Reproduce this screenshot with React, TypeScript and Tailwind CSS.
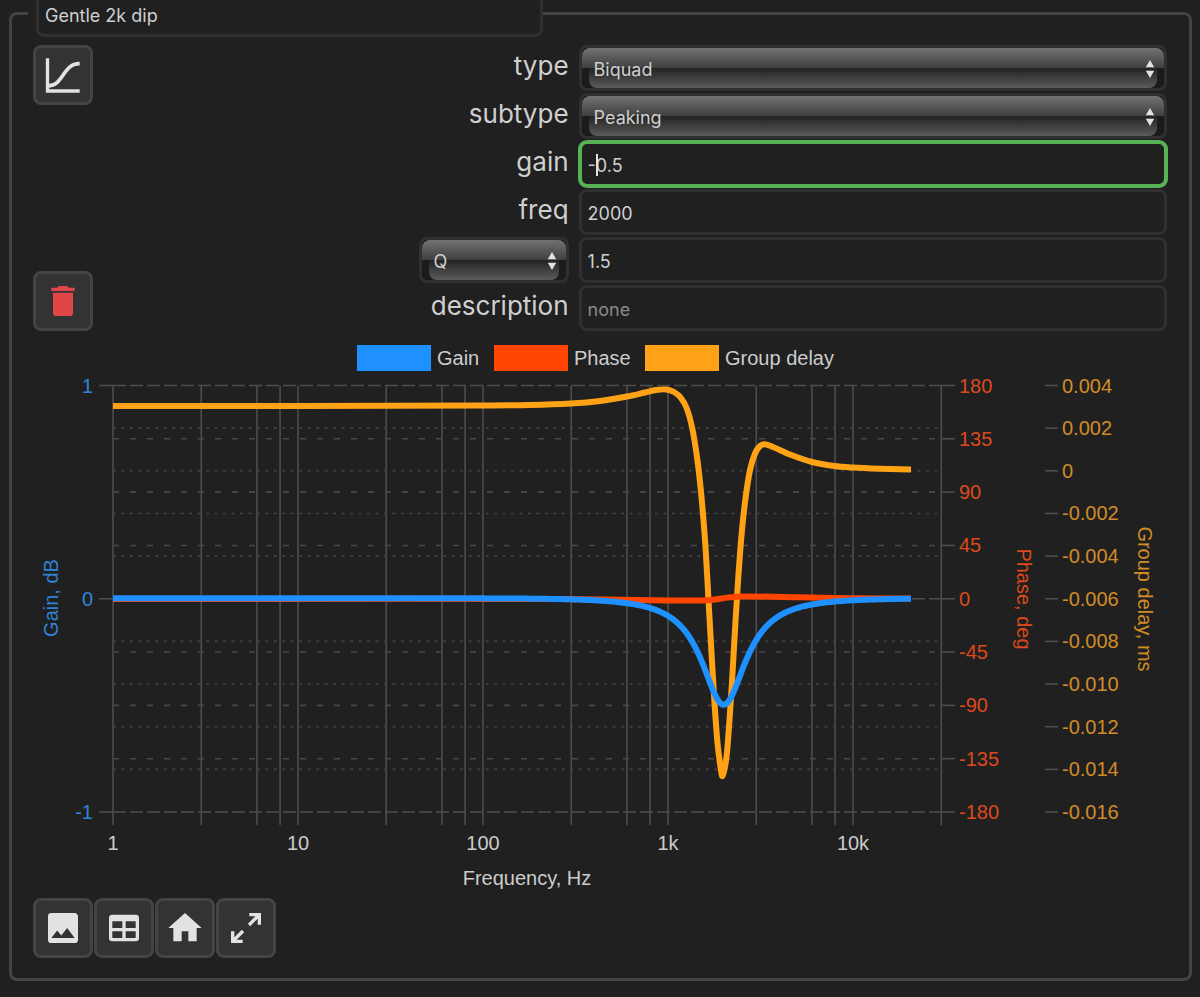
import { useState } from "react";
import type { ReactNode } from "react";

const ICONS = {
  image:
    "M8.5,13.5L11,16.5L14.5,12L19,18H5M21,19V5C21,3.89 20.1,3 19,3H5A2,2 0 0,0 3,5V19A2,2 0 0,0 5,21H19A2,2 0 0,0 21,19Z",
  table:
    "M5,4H19A2,2 0 0,1 21,6V18A2,2 0 0,1 19,20H5A2,2 0 0,1 3,18V6A2,2 0 0,1 5,4M5,8V12H11V8H5M13,8V12H19V8H13M5,14V18H11V14H5M13,14V18H19V14H13Z",
  home: "M10,20V14H14V20H19V12H22L12,3L2,12H5V20H10Z",
  expand:
    "M10,21V19H6.41L10.91,14.5L9.5,13.09L5,17.59V14H3V21H10M14.5,10.91L19,6.41V10H21V3H14V5H17.59L13.09,9.5L14.5,10.91Z",
  trash:
    "M19,4H15.5L14.5,3H9.5L8.5,4H5V6H19M6,19A2,2 0 0,0 8,21H16A2,2 0 0,0 18,19V7H6V19Z",
};

function Icon({ path }: { path: string }) {
  return (
    <svg viewBox="0 0 24 24" className="h-10 w-10" fill="currentColor">
      <path d={path} />
    </svg>
  );
}

function CurveIcon() {
  return (
    <svg
      viewBox="0 0 24 24"
      className="h-10 w-10"
      fill="none"
      stroke="currentColor"
      strokeWidth="2"
    >
      <path d="M2.700 2v19.600h19.300" />
      <path d="M3 18.500C12.500 18.500 11.500 5.200 22 5.200" strokeWidth="2.200" />
    </svg>
  );
}

function IconButton({
  label,
  danger = false,
  children,
}: {
  label: string;
  danger?: boolean;
  children: ReactNode;
}) {
  return (
    <button
      type="button"
      aria-label={label}
      className={[
        "flex h-[60px] w-[60px] cursor-pointer items-center justify-center rounded-lg border-[3px] border-[#444444] bg-[#333333] hover:bg-[#3d3d3d]",
        danger ? "text-[#e04648]" : "text-[#e2e2e2]",
      ].join(" ")}
    >
      {children}
    </button>
  );
}

function GlossySelect({
  id,
  label,
  options,
}: {
  id: string;
  label?: string;
  options: string[];
}) {
  const [value, setValue] = useState(options[0]);

  return (
    <div className="relative h-[46px] w-full rounded-lg border-[3px] border-[#303030] bg-[#1b1b1b]">
      <div className="h-1/2 rounded-t-lg bg-gradient-to-b from-[#727272] to-[#404040]" />
      <div className="mx-[7px] h-1/2 rounded-b-lg bg-gradient-to-b from-[#232323] to-[#5c5c5c]" />
      <select
        id={id}
        aria-label={label}
        value={value}
        onChange={(e) => setValue(e.target.value)}
        className="absolute inset-0 w-full appearance-none bg-transparent px-3 pt-[2px] text-[18px] text-[#cfcfcf] outline-none"
      >
        {options.map((option) => (
          <option key={option} className="bg-[#333333]">
            {option}
          </option>
        ))}
      </select>
      <svg
        viewBox="0 0 10 18"
        className="pointer-events-none absolute top-[12px] right-[9px] h-[18px] w-[10px]"
        fill="#e2e2e2"
      >
        <path d="M5 0L9.200 7.200H0.800zM5 18L9.200 10.800H0.800z" />
      </svg>
    </div>
  );
}

function TextField({
  id,
  label,
  initial,
  placeholder,
  active = false,
}: {
  id: string;
  label?: string;
  initial: string;
  placeholder?: string;
  active?: boolean;
}) {
  const [value, setValue] = useState(initial);

  return (
    <div className="relative">
      <input
        id={id}
        aria-label={label}
        type="text"
        value={value}
        placeholder={placeholder}
        onChange={(e) => setValue(e.target.value)}
        className={[
          "h-[46px] w-full rounded-lg border-[3px] bg-[#202020] px-[6px] pt-[2px] text-[18px] text-[#cfcfcf] outline-none placeholder:text-[#8a8a8a]",
          active ? "border-[#56b454] ring-1 ring-[#56b454]" : "border-[#303030]",
        ].join(" ")}
      />
      {active ? (
        <span className="pointer-events-none absolute top-[13px] left-[17px] h-[22px] w-[2px] bg-[#e2e2e2]" />
      ) : null}
    </div>
  );
}

function FieldLabel({ htmlFor, text }: { htmlFor: string; text: string }) {
  return (
    <label htmlFor={htmlFor} className="pb-1 text-right text-[26px] leading-8">
      {text}
    </label>
  );
}

// plot area
const LEFT = 113;
const RIGHT = 941;
const TOP = 385.5;
const ZERO = 598.75;
const BOTTOM = 812;
const DECADE = 185;

const BLUE = "#1e90ff";
const RED = "#ff4500";
const ORANGE = "#ffa216";

const fx = (freq: number) => LEFT + DECADE * Math.log10(freq);

const GRID_FREQS = [
  1, 3, 6, 8, 10, 30, 60, 80, 100, 300, 600, 800, 1000, 3000, 6000, 8000, 10000,
  30000,
];
const FREQ_TICKS = [
  { freq: 1, text: "1" },
  { freq: 10, text: "10" },
  { freq: 100, text: "100" },
  { freq: 1000, text: "1k" },
  { freq: 10000, text: "10k" },
];
const GAIN_TICKS = [1, 0, -1];
const PHASE_TICKS = [180, 135, 90, 45, 0, -45, -90, -135, -180];
const DELAY_TICKS = [
  "0.004",
  "0.002",
  "0",
  "-0.002",
  "-0.004",
  "-0.006",
  "-0.008",
  "-0.010",
  "-0.012",
  "-0.014",
  "-0.016",
];

const LEGEND = [
  { text: "Gain", color: BLUE, x: 357 },
  { text: "Phase", color: RED, x: 494 },
  { text: "Group delay", color: ORANGE, x: 645 },
];

const DELAY_POINTS = [
  [113, 406], [300, 406], [482, 405.5], [530, 405], [571, 403.5], [600, 401],
  [627, 396.5], [645, 392.5], [656, 390], [666, 389.5], [674, 392],
  [681, 398], [687, 409], [692, 427], [697, 457], [701.5, 497], [705.5, 547],
  [708.5, 600], [711.5, 653], [714.5, 703], [717.5, 743], [720.5, 767],
  [722.5, 776], [726.5, 757], [729.3, 723], [731.7, 687], [735, 630],
  [738.3, 577], [742, 530], [745.7, 497], [750, 470], [755, 453.5],
  [760, 446], [765, 444.3], [773, 447], [790, 454.5], [812, 462],
  [834, 466], [852, 467.5], [880, 468.7], [911, 469.5],
];

const PHASE_POINTS = [
  [113, 599], [560, 599], [640, 600], [700, 600.5], [715, 599.5], [728, 597.5],
  [745, 596.5], [800, 597.3], [850, 598.3], [911, 598.5],
];

function smoothPath(points: number[][]) {
  let d = `M${points[0][0]} ${points[0][1]}`;
  for (let i = 0; i < points.length - 1; i++) {
    const p0 = points[Math.max(0, i - 1)];
    const p1 = points[i];
    const p2 = points[i + 1];
    const p3 = points[Math.min(points.length - 1, i + 2)];
    const t = (p2[0] - p1[0]) / 3;
    const m1 = (p2[1] - p0[1]) / (p2[0] - p0[0]);
    const m2 = (p3[1] - p1[1]) / (p3[0] - p1[0]);
    d += `C${p1[0] + t} ${p1[1] + m1 * t} ${p2[0] - t} ${p2[1] - m2 * t} ${p2[0]} ${p2[1]}`;
  }
  return d;
}

// magnitude response of a peaking biquad
function peakingGain(freq: number, center: number, gain: number, q: number) {
  const a = Math.pow(10, gain / 40);
  const w = freq / center;
  const re = (1 - w * w) ** 2;
  const num = re + ((w * a) / q) ** 2;
  const den = re + (w / (a * q)) ** 2;
  return 10 * Math.log10(num / den);
}

function gainPath() {
  const parts: string[] = [];
  for (let x = LEFT; x <= 911; x += 2) {
    const freq = Math.pow(10, (x - LEFT) / DECADE);
    const y = ZERO - 0.5 - peakingGain(freq, 2000, -0.5, 1.5) * (ZERO - TOP);
    parts.push(`${x} ${y.toFixed(2)}`);
  }
  return `M${parts.join("L")}`;
}

function ResponseChart() {
  const height = BOTTOM - TOP;

  return (
    <svg
      viewBox="33 331 1135 567"
      className="block h-auto w-full font-['Liberation_Sans',Arial,sans-serif] text-[20px]"
      role="img"
      aria-label="Filter response"
    >
      {LEGEND.map((item) => (
        <g key={item.text}>
          <rect x={item.x} y="345" width="74" height="26" fill={item.color} />
          <text x={item.x + 80} y="365" fill="#cccccc">
            {item.text}
          </text>
        </g>
      ))}

      <g stroke="#4d4d4d" strokeWidth="1.600">
        {GRID_FREQS.map((freq) => (
          <line key={freq} x1={fx(freq)} x2={fx(freq)} y1={TOP} y2={BOTTOM + 13} />
        ))}
        {GAIN_TICKS.map((gain) => {
          const y = ZERO - gain * (ZERO - TOP);
          return (
            <g key={gain}>
              <line x1={LEFT - 14} x2={LEFT} y1={y} y2={y} />
              <line x1={LEFT} x2={RIGHT} y1={y} y2={y} strokeDasharray="13 4" />
            </g>
          );
        })}
        {PHASE_TICKS.map((phase, i) => {
          const y = TOP + (height * i) / 8;
          return (
            <g key={phase}>
              <line x1={RIGHT} x2={RIGHT + 14} y1={y} y2={y} />
              {i % 4 ? (
                <line
                  x1={LEFT}
                  x2={RIGHT}
                  y1={y}
                  y2={y}
                  stroke="#484848"
                  strokeDasharray="6 11"
                />
              ) : null}
            </g>
          );
        })}
        {DELAY_TICKS.map((delay, i) => {
          const y = TOP + (height * i) / 10;
          return (
            <g key={delay}>
              <line x1="1045" x2="1058" y1={y} y2={y} />
              {i % 5 ? (
                <line
                  x1={LEFT}
                  x2={RIGHT}
                  y1={y}
                  y2={y}
                  stroke="#424242"
                  strokeDasharray="2.800 5.670"
                />
              ) : null}
            </g>
          );
        })}
      </g>

      <g fill="none" strokeWidth="6" strokeLinejoin="round">
        <path d={smoothPath(DELAY_POINTS)} stroke={ORANGE} />
        <path d={smoothPath(PHASE_POINTS)} stroke={RED} />
        <path d={gainPath()} stroke={BLUE} />
      </g>

      <g fill="#cccccc" textAnchor="middle">
        {FREQ_TICKS.map((tick) => (
          <text key={tick.text} x={fx(tick.freq)} y="850">
            {tick.text}
          </text>
        ))}
        <text x="527" y="885">
          Frequency, Hz
        </text>
      </g>

      <g fill="#2f83d6" textAnchor="end">
        {GAIN_TICKS.map((gain) => (
          <text key={gain} x="93" y={ZERO - gain * (ZERO - TOP) + 7}>
            {gain}
          </text>
        ))}
      </g>
      <text fill="#2f83d6" textAnchor="middle" transform="translate(58 598) rotate(-90)">
        Gain, dB
      </text>

      <g fill="#dc4a1c">
        {PHASE_TICKS.map((phase, i) => (
          <text key={phase} x="959" y={TOP + (height * i) / 8 + 7}>
            {phase}
          </text>
        ))}
        <text textAnchor="middle" transform="translate(1017 599) rotate(90)">
          Phase, deg
        </text>
      </g>

      <g fill="#d18c26">
        {DELAY_TICKS.map((delay, i) => (
          <text key={delay} x="1062" y={TOP + (height * i) / 10 + 7}>
            {delay}
          </text>
        ))}
        <text textAnchor="middle" transform="translate(1138 599) rotate(90)">
          Group delay, ms
        </text>
      </g>
    </svg>
  );
}

export default function App() {
  const [name, setName] = useState("Gentle 2k dip");

  return (
    <main className="flow-root min-h-screen overflow-hidden bg-[#202020] pr-2 pl-[9px] font-[Inter,sans-serif] text-[#cfcfcf]">
      <fieldset className="-mt-[10px] rounded-lg border-[3px] border-[#444444] px-4 pb-5">
        <legend className="w-[45%] pl-2">
          <input
            type="text"
            aria-label="Filter name"
            value={name}
            onChange={(e) => setName(e.target.value)}
            className="block h-[47px] w-full rounded-lg border-[3px] border-[#303030] bg-[#202020] px-[6px] pt-[3px] text-[18px] outline-none"
          />
        </legend>

        <div className="px-[5px] pt-2">
          <div className="flex justify-between pr-px">
            <div className="flex flex-col justify-between">
              <IconButton label="Plot filter">
                <CurveIcon />
              </IconButton>
              <IconButton label="Delete filter" danger>
                <Icon path={ICONS.trash} />
              </IconButton>
            </div>

            <form className="grid w-[66%] grid-cols-[150px_1fr] items-center gap-x-[10px] gap-y-[2px]">
              <FieldLabel htmlFor="type" text="type" />
              <GlossySelect id="type" options={["Biquad"]} />
              <FieldLabel htmlFor="subtype" text="subtype" />
              <GlossySelect id="subtype" options={["Peaking"]} />
              <FieldLabel htmlFor="gain" text="gain" />
              <TextField id="gain" initial="-0.5" active />
              <FieldLabel htmlFor="freq" text="freq" />
              <TextField id="freq" initial="2000" />
              <GlossySelect id="width-kind" label="Width parameter" options={["Q"]} />
              <TextField id="q" label="Q value" initial="1.5" />
              <FieldLabel htmlFor="description" text="description" />
              <TextField id="description" initial="" placeholder="none" />
            </form>
          </div>

          <ResponseChart />

          <div className="flex gap-px">
            <IconButton label="Save image">
              <Icon path={ICONS.image} />
            </IconButton>
            <IconButton label="Save table">
              <Icon path={ICONS.table} />
            </IconButton>
            <IconButton label="Reset view">
              <Icon path={ICONS.home} />
            </IconButton>
            <IconButton label="Full screen">
              <Icon path={ICONS.expand} />
            </IconButton>
          </div>
        </div>
      </fieldset>
    </main>
  );
}
